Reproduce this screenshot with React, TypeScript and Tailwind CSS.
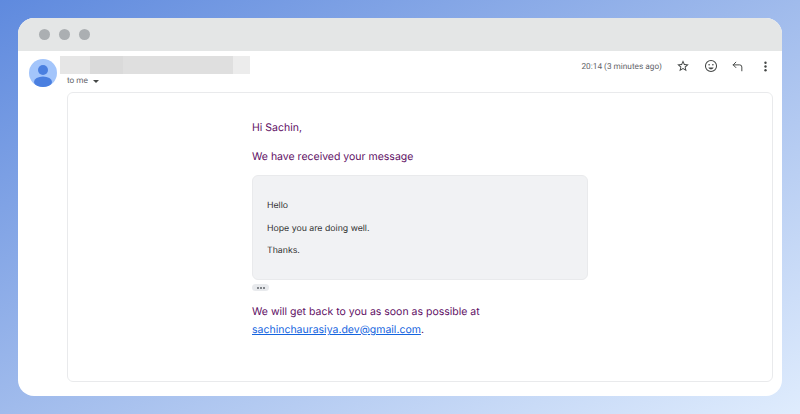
import { CornerUpLeft } from "lucide-react";

export default function App() {
  return (
    <div className="h-[414px] w-[800px] overflow-hidden bg-[linear-gradient(to_bottom_right,#5f8ade_0%,#a0bbec_50%,#dfecfd_100%)] p-[18px] font-['Inter',sans-serif] [text-rendering:geometricPrecision]">
      <div className="flex h-[378px] w-[764px] flex-col overflow-hidden rounded-[16px] bg-white">
        <div className="flex h-[33px] items-center gap-[9px] bg-[#e4e6e6] pl-[21px]">
          <span className="h-[11px] w-[11px] rounded-full bg-[#abafb2]" />
          <span className="h-[11px] w-[11px] rounded-full bg-[#abafb2]" />
          <span className="h-[11px] w-[11px] rounded-full bg-[#abafb2]" />
        </div>

        <div className="flex h-[41px] pl-[11px] pr-[10px]">
          <div className="mt-[8px] h-[28px] w-[28px] overflow-hidden rounded-full">
            <svg viewBox="0 0 28 28" className="h-full w-full">
              <rect width="28" height="28" fill="#a3c5fb" />
              <circle cx="14" cy="11" r="5" fill="#4a7fe0" />
              <ellipse cx="14" cy="23" rx="9" ry="5.5" fill="#4a7fe0" />
            </svg>
          </div>
          <div className="ml-[3px] mt-[5px] flex flex-col">
            <div className="flex h-[18px] w-[190px]">
              <div className="w-[30px] bg-[#e6e6e6]" />
              <div className="w-[33px] bg-[#dadada]" />
              <div className="w-[110px] bg-[#dfdfdf]" />
              <div className="w-[17px] bg-[#ececec]" />
            </div>
            <div className="ml-[7px] mt-[1px] flex items-center gap-[5px] font-['Roboto',sans-serif] text-[8.25px] leading-[12px] text-[#5f6368]">
              <span>to me</span>
              <span className="mt-[1px] h-0 w-0 border-x-[3px] border-t-[3px] border-x-transparent border-t-[#444746]" />
            </div>
          </div>
          <div className="ml-auto mt-[6px] flex h-[18px] items-center text-[#444746]">
            <span className="mr-[14px] mt-[2px] font-['Roboto',sans-serif] text-[8.25px] text-[#5f6368]">20:14 (3 minutes ago)</span>
            {/* material style star_border */}
            <svg viewBox="0 0 24 24" className="mr-[14px] h-[14px] w-[14px]" fill="currentColor">
              <path d="M22 9.24l-7.19-.62L12 2 9.19 8.63 2 9.24l5.46 4.73L5.82 21 12 17.27 18.18 21l-1.63-7.03L22 9.24zM12 15.4l-3.76 2.27 1-4.28-3.32-2.88 4.38-.38L12 6.1l1.71 4.04 4.38.38-3.32 2.88 1 4.28L12 15.4z" />
            </svg>
            <svg viewBox="0 0 24 24" className="mr-[13px] h-[14px] w-[14px]" fill="none" stroke="currentColor" strokeWidth="1.8">
              <circle cx="12" cy="12" r="9.5" />
              <circle cx="8.8" cy="9.8" r="1.4" fill="currentColor" stroke="none" />
              <circle cx="15.2" cy="9.8" r="1.4" fill="currentColor" stroke="none" />
              <path d="M7.5 14.5h9c-.6 2-2.4 3.2-4.5 3.2s-3.900-1.200-4.500-3.200z" fill="currentColor" stroke="none" />
            </svg>
            <CornerUpLeft size={13} strokeWidth={1.8} className="mr-[15px]" />
            <svg viewBox="0 0 24 24" className="h-[13px] w-[13px]" fill="currentColor">
              <circle cx="12" cy="5" r="2.200" />
              <circle cx="12" cy="12" r="2.200" />
              <circle cx="12" cy="19" r="2.200" />
            </svg>
          </div>
        </div>

        <div className="ml-[49px] h-[290px] w-[706px] rounded-[6px] border border-[#e9eaec] pl-[184px] pt-[28px]">
          <div className="w-[336px] text-[10.5px] text-[#611065]">
            <p className="leading-[14px]">Hi Sachin,</p>
            <p className="mt-[15px] leading-[14px]">We have received your message</p>

            <div className="mt-[11px] h-[105px] rounded-[6px] border border-[#e9eaec] bg-[#f1f2f4] pl-[14px] pt-[24px] text-[8.75px] leading-[12px] text-[#333333]">
              <p>Hello</p>
              <p className="mt-[10.5px]">Hope you are doing well.</p>
              <p className="mt-[10.5px]">Thanks.</p>
            </div>

            <div className="mt-[4px] flex h-[7px] w-[17px] items-center justify-center gap-[1px] rounded-full bg-[#e8eaed]">
              <span className="h-[2px] w-[2px] rounded-full bg-[#5f6368]" />
              <span className="h-[2px] w-[2px] rounded-full bg-[#5f6368]" />
              <span className="h-[2px] w-[2px] rounded-full bg-[#5f6368]" />
            </div>

            <p className="mt-[12px] leading-[18px]">
              We will get back to you as soon as possible at
              <br />
              <a href="#" className="text-[#1565e0] underline">
                sachinchaurasiya.dev@gmail.com
              </a>
              .
            </p>
          </div>
        </div>
      </div>
    </div>
  );
}
